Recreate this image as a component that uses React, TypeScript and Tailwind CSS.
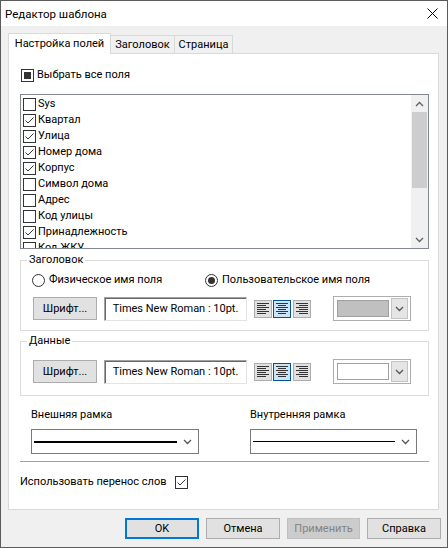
import React from 'react';

const Check = ({ on = false }: { on?: boolean }) => (
  <svg width="13" height="13" viewBox="0 0 13 13" className="shrink-0">
    <rect x="0.5" y="0.5" width="12" height="12" fill="#fff" stroke="#333" />
    {on && <path d="M2.5 6.5 L5 9 L10.5 3.5" fill="none" stroke="#333" strokeWidth="1" />}
  </svg>
);

const Mixed = () => (
  <svg width="13" height="13" viewBox="0 0 13 13" className="shrink-0">
    <rect x="0.5" y="0.5" width="12" height="12" fill="#fff" stroke="#333" />
    <rect x="3" y="3" width="7" height="7" fill="#333" />
  </svg>
);

const Radio = ({ on = false }: { on?: boolean }) => (
  <svg width="13" height="13" viewBox="0 0 13 13" className="shrink-0">
    <circle cx="6.5" cy="6.5" r="6" fill="#fff" stroke="#333" />
    {on && <circle cx="6.5" cy="6.5" r="3.5" fill="#333" />}
  </svg>
);

const Chevron = ({ up = false, color = '#606060' }: { up?: boolean; color?: string }) => (
  <svg width="9" height="6" viewBox="0 0 9 6">
    <path d={up ? 'M1 5 L4.5 1.5 L8 5' : 'M1 1 L4.5 4.5 L8 1'} fill="none" stroke={color} strokeWidth="1.3" />
  </svg>
);

type Align = 'left' | 'center' | 'right';

const AlignIcon = ({ align }: { align: Align }) => {
  const rows = [4, 6, 8, 10, 12, 14];
  return (
    <svg width="16" height="16" viewBox="0 0 16 16">
      {rows.map((y, i) => {
        const long = i % 2 === 0;
        let x1 = 2;
        let x2 = 14;
        if (!long) {
          if (align === 'left') x2 = 11;
          if (align === 'center') { x1 = 4; x2 = 12; }
          if (align === 'right') x1 = 5;
        }
        return <line key={y} x1={x1} x2={x2} y1={y - 1.5} y2={y - 1.5} stroke="#333" strokeWidth="1" />;
      })}
    </svg>
  );
};

const AlignButtons = () => (
  <div className="ml-[7px] flex gap-[1px]">
    <div className="w-[18px] h-[18px] bg-[#e1e1e1] border border-[#adadad] flex items-center justify-center">
      <AlignIcon align="left" />
    </div>
    <div className="w-[18px] h-[18px] bg-[#cce4f7] border border-[#005499] flex items-center justify-center">
      <AlignIcon align="center" />
    </div>
    <div className="ml-[1px] w-[18px] h-[18px] bg-[#e1e1e1] border border-[#adadad] flex items-center justify-center">
      <AlignIcon align="right" />
    </div>
  </div>
);

const ColorCombo = ({ swatch }: { swatch: string }) => (
  <div className="ml-[22px] w-[78px] h-[25px] border border-[#adadad] bg-white flex items-center pl-[3px] pr-[2px]">
    <div className="w-[53px] h-[17px] border border-[#a0a0a0]" style={{ background: swatch }} />
    <div className="ml-[2px] w-[17px] h-[21px] bg-[#e5e5e5] border border-[#c4c4c4] flex items-center justify-center">
      <Chevron color="#555" />
    </div>
  </div>
);

const FontRow = () => (
  <div className="flex items-center pl-[12px]">
    <div className="w-[64px] h-[23px] bg-[#e1e1e1] border border-[#adadad] flex items-center justify-center">
      Шрифт...
    </div>
    <div className="ml-[7px] w-[143px] h-[24px] bg-white border border-t-[#a0a0a0] border-l-[#a0a0a0] border-b-[#e3e3e3] border-r-[#e3e3e3] shadow-[inset_1px_1px_0_#696969] flex items-center justify-center">
      Times New Roman : 10pt.
    </div>
    <AlignButtons />
  </div>
);

const LineCombo = ({ thick }: { thick?: boolean }) => (
  <div className="h-[25px] border border-[#7a7a7a] bg-white flex items-center pl-[2px] pr-[6px]">
    <div className={thick ? 'flex-1 h-[2px] bg-black' : 'flex-1 h-[1px] bg-black'} />
    <div className="ml-[6px]">
      <Chevron color="#555" />
    </div>
  </div>
);

const fields = [
  { name: 'Sys', on: false },
  { name: 'Квартал', on: true },
  { name: 'Улица', on: true },
  { name: 'Номер дома', on: true },
  { name: 'Корпус', on: true },
  { name: 'Символ дома', on: false },
  { name: 'Адрес', on: false },
  { name: 'Код улицы', on: false },
  { name: 'Принадлежность', on: true },
  { name: 'Код ЖКУ', on: false },
];

export default function App() {
  return (
    <div className="w-[448px] h-[548px] border border-[#5b5b5b] bg-[#f0f0f0] flex flex-col text-[11px] leading-[16px] text-black whitespace-nowrap font-['Roboto','Noto_Sans',sans-serif]">
      {/* title bar */}
      <div className="h-[25px] shrink-0 bg-white flex items-center justify-between pl-[4px] pr-[9px]">
        <span className="text-[11.5px]">Редактор шаблона</span>
        <svg width="11" height="11" viewBox="0 0 11 11">
          <path d="M0.5 0.5 L10.5 10.5 M10.5 0.5 L0.5 10.5" stroke="#000" strokeWidth="1" />
        </svg>
      </div>

      <div className="flex-1 pl-[7px] pr-[8px] pt-[7px]">
        {/* tabs */}
        <div className="flex items-end h-[20px]">
          <div className="relative z-10 -mb-px w-[103px] h-[21px] bg-white border border-b-0 border-[#d9d9d9] flex items-center justify-center">
            Настройка полей
          </div>
          <div className="w-[64px] h-[18px] border-t border-r border-[#d9d9d9] flex items-center justify-center">
            Заголовок
          </div>
          <div className="w-[58px] h-[18px] border-t border-r border-[#d9d9d9] flex items-center justify-center">
            Страница
          </div>
        </div>

        {/* tab page */}
        <div className="h-[457px] bg-white border border-[#d9d9d9] pl-[11px] pr-[9px] flex flex-col">
          <div className="mt-[13px] h-[16px] flex items-center gap-[3px] pl-[1px]">
            <Mixed />
            <span>Выбрать все поля</span>
          </div>

          {/* list */}
          <div className="mt-[11px] h-[155px] border border-[#828790] flex overflow-hidden">
            <div className="flex-1 pt-[1px] pl-[2px] overflow-hidden">
              {fields.map((f) => (
                <div key={f.name} className="h-[16px] flex items-center gap-[2px]">
                  <Check on={f.on} />
                  <span>{f.name}</span>
                </div>
              ))}
            </div>
            <div className="w-[17px] bg-[#f0f0f0] flex flex-col">
              <div className="h-[17px] flex items-center justify-center">
                <Chevron up />
              </div>
              <div className="mx-[1px] h-[76px] bg-[#cdcdcd]" />
              <div className="flex-1" />
              <div className="h-[17px] flex items-center justify-center">
                <Chevron />
              </div>
            </div>
          </div>

          {/* header group */}
          <fieldset className="mt-[3px] border border-[#dcdcdc] pb-[9px]">
            <legend className="ml-[6px] px-[2px]">Заголовок</legend>
            <div className="mt-[4px] h-[16px] flex items-center pl-[11px]">
              <div className="w-[173px] flex items-center gap-[4px]">
                <Radio />
                <span>Физическое имя поля</span>
              </div>
              <div className="flex items-center gap-[4px]">
                <Radio on />
                <span>Пользовательское имя поля</span>
              </div>
            </div>
            <div className="mt-[8px] flex items-center">
              <FontRow />
              <ColorCombo swatch="#c0c0c0" />
            </div>
          </fieldset>

          {/* data group */}
          <fieldset className="mt-[2px] border border-[#dcdcdc] pb-[11px]">
            <legend className="ml-[6px] px-[2px]">Данные</legend>
            <div className="mt-[10px] flex items-center">
              <FontRow />
              <ColorCombo swatch="#ffffff" />
            </div>
          </fieldset>

          {/* frames */}
          <div className="mt-[11px] pl-[11px] flex">
            <div className="w-[168px] mr-[51px]">
              <div className="h-[16px]">Внешняя рамка</div>
              <div className="mt-[6px]">
                <LineCombo thick />
              </div>
            </div>
            <div className="w-[167px]">
              <div className="h-[16px]">Внутренняя рамка</div>
              <div className="mt-[6px]">
                <LineCombo />
              </div>
            </div>
          </div>

          <div className="mt-[7px] h-[1px] bg-[#a0a0a0]" />

          <div className="mt-[12px] h-[16px] flex items-center gap-[8px]">
            <span>Использовать перенос слов</span>
            <Check on />
          </div>
        </div>

        {/* dialog buttons */}
        <div className="mt-[8px] -mr-[2px] flex justify-end gap-[7px]">
          <div className="w-[74px] h-[21px] bg-[#e1e1e1] border-2 border-[#0078d7] flex items-center justify-center">OK</div>
          <div className="w-[74px] h-[21px] bg-[#e1e1e1] border border-[#adadad] flex items-center justify-center">Отмена</div>
          <div className="w-[73px] h-[21px] bg-[#cccccc] border border-[#bfbfbf] text-[#838383] flex items-center justify-center">Применить</div>
          <div className="w-[74px] h-[21px] bg-[#e1e1e1] border border-[#adadad] flex items-center justify-center">Справка</div>
        </div>
      </div>
    </div>
  );
}
